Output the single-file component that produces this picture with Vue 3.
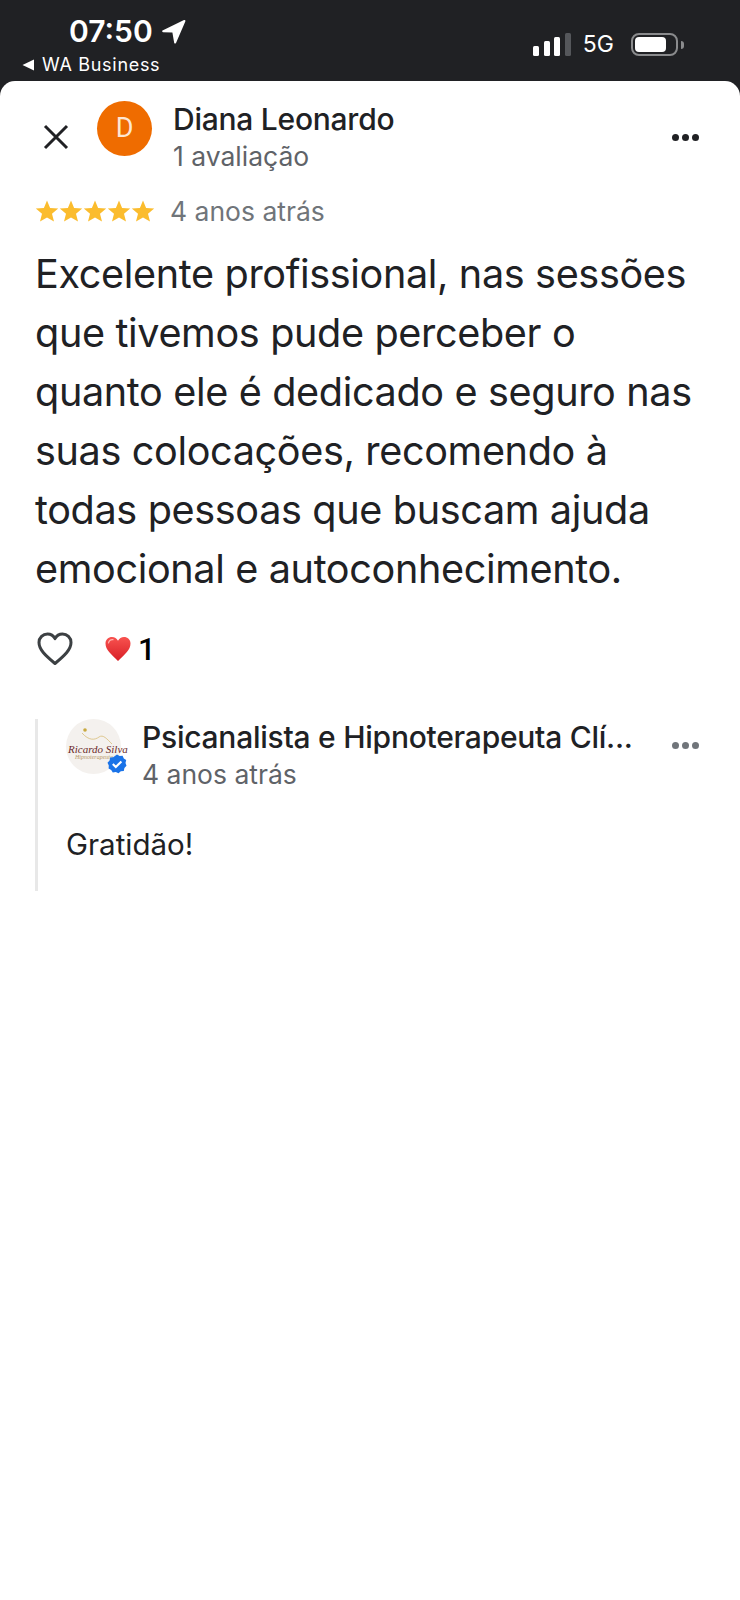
<script setup>
const stars = [0, 1, 2, 3, 4]
const bars = [
  { h: 10, c: '#fff' },
  { h: 15, c: '#fff' },
  { h: 19, c: '#fff' },
  { h: 23, c: '#55575b' }
]
</script>

<template>
  <div class="page">
    <header class="status">
      <div class="status-left">
        <div class="time-row">
          <span class="time">07:50</span>
          <svg class="loc" width="25" height="25" viewBox="0 0 25 25">
            <path d="M1.5 11.5 L23 1 Q24.8 0.6 24.3 2.4 L15 24 Q14 25.2 13.2 24 L11.4 13.4 L2 13.2 Q0.6 12.4 1.5 11.5 Z" fill="#fff" />
          </svg>
        </div>
        <div class="back-row">
          <svg width="12" height="12" viewBox="0 0 12 12"><path d="M0.5 6 L12 0.5 V11.5 Z" fill="#fff" /></svg>
          <span>WA Business</span>
        </div>
      </div>
      <div class="status-right">
        <div class="bars">
          <i v-for="(b, i) in bars" :key="i" :style="{ height: b.h + 'px', background: b.c }"></i>
        </div>
        <span class="net">5G</span>
        <div class="battery"><div class="battery-fill"></div></div>
        <div class="battery-tip"></div>
      </div>
    </header>

    <main class="sheet">
      <div class="top">
        <svg class="close" width="26" height="26" viewBox="0 0 26 26">
          <path d="M2 2 L24 24 M24 2 L2 24" stroke="#202124" stroke-width="3" fill="none" />
        </svg>
        <div class="avatar">D</div>
        <div class="who">
          <div class="name">Diana Leonardo</div>
          <div class="sub">1 avaliação</div>
        </div>
        <div class="dots dark"><i></i><i></i><i></i></div>
      </div>

      <div class="rating">
        <div class="stars">
          <svg v-for="s in stars" :key="s" width="24" height="22" viewBox="0 0 24 22">
            <path d="M12 0.5 L15.1 8 L23.2 8.6 L17 13.8 L19 21.6 L12 17.4 L5 21.6 L7 13.8 L0.8 8.6 L8.9 8 Z" fill="#fbbc2d" />
          </svg>
        </div>
        <span class="when">4 anos atrás</span>
      </div>

      <p class="body">Excelente profissional, nas sessões<br />que tivemos pude perceber o<br />quanto ele é dedicado e seguro nas<br />suas colocações, recomendo à<br />todas pessoas que buscam ajuda<br />emocional e autoconhecimento.</p>

      <div class="likes">
        <svg class="outline" width="36" height="34" viewBox="0 0 36 34">
          <path d="M18 31.5 C 8 23, 2 17.5, 2 10.5 C 2 5.5, 6 2, 10.5 2 C 13.6 2, 16.4 3.6, 18 6.6 C 19.6 3.6, 22.4 2, 25.5 2 C 30 2, 34 5.5, 34 10.5 C 34 17.5, 28 23, 18 31.5 Z" fill="none" stroke="#3c4043" stroke-width="3" stroke-linejoin="round" />
        </svg>
        <svg class="red" width="26" height="26" viewBox="0 0 26 26">
          <defs>
            <linearGradient id="rh" x1="0" y1="0" x2="0" y2="1">
              <stop offset="0" stop-color="#f8524f" />
              <stop offset="1" stop-color="#d81f26" />
            </linearGradient>
          </defs>
          <path d="M13 25 C 6 18, 0.5 14, 0.5 7.5 C 0.5 3.5, 3.5 1, 7 1 C 9.6 1, 11.8 2.4, 13 4.8 C 14.2 2.4, 16.4 1, 19 1 C 22.5 1, 25.5 3.5, 25.5 7.5 C 25.5 14, 20 18, 13 25 Z" fill="url(#rh)" />
          <path d="M3.5 7 C 4 4.5, 6 3.4, 8 3.6" fill="none" stroke="#ffb3ae" stroke-width="1.2" stroke-linecap="round" />
        </svg>
        <span class="count">1</span>
      </div>

      <section class="reply">
        <div class="reply-top">
          <div class="logo">
            <svg class="swoosh" width="36" height="24" viewBox="0 0 36 24">
              <circle cx="8" cy="4" r="1.8" fill="#c9a93f" />
              <path d="M5 7 C 12 15, 18 14, 22 11 C 26 8, 30 13, 35 18" fill="none" stroke="#d4b668" stroke-width="0.7" />
            </svg>
            <span class="logo-text">Ricardo Silva</span>
            <span class="logo-sub">Hipnoterapeuta</span>
            <svg class="badge" width="20" height="20" viewBox="0 0 20 20">
              <path d="M10 0.5 L12.6 2 L15.6 1.8 L16.8 4.4 L19.2 6 L18.5 9 L19.5 11.8 L17.4 14 L16.8 17 L13.8 17.2 L11.5 19.2 L8.8 18 L5.8 18.6 L4.2 16 L1.6 14.5 L1.8 11.5 L0.5 8.8 L2.6 6.6 L3.2 3.6 L6.2 3.2 Z" fill="#1a73e8" />
              <path d="M5.8 10 L8.8 13 L14.4 7.4" fill="none" stroke="#fff" stroke-width="2.1" />
            </svg>
          </div>
          <div class="reply-who">
            <div class="reply-name">Psicanalista e Hipnoterapeuta Clí...</div>
            <div class="sub">4 anos atrás</div>
          </div>
          <div class="dots grey"><i></i><i></i><i></i></div>
        </div>
        <p class="reply-body">Gratidão!</p>
      </section>
    </main>
  </div>
</template>

<style>
html, body { margin: 0; background: #fff; }
</style>

<style scoped>
.page {
  width: 740px;
  height: 1600px;
  background: #202124;
  font-family: Inter, "Noto Sans", sans-serif;
  display: flex;
  flex-direction: column;
  overflow: hidden;
}
.status {
  height: 81px;
  flex: none;
  display: flex;
  justify-content: space-between;
  color: #fff;
  box-sizing: border-box;
  padding: 0 56px 0 22px;
}
.status-left { display: flex; flex-direction: column; }
.time-row {
  display: flex;
  align-items: center;
  gap: 8px;
  margin: 14px 0 0 47px;
  height: 34px;
}
.time {
  font-size: 30px;
  font-weight: 600;
  line-height: 34px;
}
.back-row {
  display: flex;
  align-items: center;
  gap: 8px;
  font-size: 18px;
  font-weight: 400;
  letter-spacing: 0.7px;
  line-height: 22px;
  margin-top: 6px;
}
.status-right {
  display: flex;
  align-items: center;
  height: 23px;
  margin-top: 33px;
}
.bars { display: flex; align-items: flex-end; gap: 4.5px; height: 23px; }
.bars i { display: block; width: 6px; border-radius: 1.5px; }
.net {
  font-size: 23px;
  font-weight: 400;
  margin-left: 12px;
  line-height: 23px;
}
.battery {
  width: 47px;
  height: 23px;
  box-sizing: border-box;
  border: 2px solid #8a8b8d;
  border-radius: 8px;
  padding: 2px;
  margin-left: 17px;
}
.battery-fill { width: 31px; height: 15px; background: #fff; border-radius: 4px; }
.battery-tip {
  width: 3px;
  height: 8px;
  background: #8a8b8d;
  border-radius: 0 3px 3px 0;
  margin-left: 3px;
}

.sheet {
  flex: 1;
  background: #fff;
  border-radius: 15px 15px 0 0;
  box-sizing: border-box;
  padding: 20px 35px 0;
}
.top { display: flex; align-items: flex-start; height: 74px; }
.close { margin: 23px 0 0 8px; flex: none; }
.avatar {
  width: 55px;
  height: 55px;
  border-radius: 50%;
  background: #ef6c00;
  color: #fde6d2;
  font-family: Roboto, sans-serif;
  font-size: 27px;
  line-height: 55px;
  text-align: center;
  margin: 0 0 0 28px;
  flex: none;
}
.who { margin-left: 21px; flex: 1; }
.name {
  font-size: 30px;
  font-weight: 500;
  line-height: 36px;
  color: #202124;
  letter-spacing: -0.25px;
}
.sub {
  font-size: 26.5px;
  line-height: 36px;
  margin-top: 1px;
  color: #5f6368;
}
.dots { display: flex; gap: 3px; flex: none; }
.dots i { display: block; width: 7px; height: 7px; border-radius: 50%; }
.dots.dark { margin: 33px 6px 0 0; }
.dots.dark i { background: #202124; }
.dots.grey { margin: 23px 6px 0 0; }
.dots.grey i { background: #70757a; }

.rating { display: flex; align-items: center; height: 36px; margin-top: 18px; }
.stars { display: flex; }
.when {
  font-size: 26.5px;
  line-height: 36px;
  color: #70757a;
  margin-left: 15px;
}
.body {
  margin: 16px 0 0;
  font-size: 39.6px;
  line-height: 59px;
  color: #202124;
  white-space: nowrap;
  letter-spacing: -0.35px;
}
.likes { display: flex; align-items: center; height: 40px; margin-top: 30px; }
.outline { margin-left: 2px; }
.red { margin-left: 32px; }
.count { font-family: Roboto, sans-serif; font-size: 31px; font-weight: 500; color: #000; margin-left: 7px; }

.reply {
  margin-top: 50px;
  height: 172px;
  border-left: 3px solid #e8e8e8;
  padding-left: 28px;
}
.reply-top { display: flex; align-items: flex-start; }
.logo {
  position: relative;
  width: 55px;
  height: 55px;
  border-radius: 50%;
  background: #f4f1ee;
  flex: none;
}
.swoosh { position: absolute; left: 11px; top: 7px; }
.logo-text {
  position: absolute;
  left: 2px;
  top: 24px;
  font-family: "Liberation Serif", serif;
  font-style: italic;
  font-size: 11px;
  line-height: 12px;
  color: #6b2a2a;
  white-space: nowrap;
}
.logo-sub {
  position: absolute;
  left: 9px;
  top: 35px;
  font-family: "Liberation Serif", serif;
  font-style: italic;
  font-size: 6px;
  line-height: 7px;
  color: #b99a6a;
  white-space: nowrap;
}
.badge { position: absolute; right: -6px; bottom: 0; }
.reply-who { margin-left: 21px; width: 491px; flex: none; }
.reply-name {
  font-size: 30px;
  font-weight: 500;
  line-height: 36px;
  color: #202124;
  white-space: nowrap;
  letter-spacing: -0.25px;
}
.reply .dots { margin-left: auto; }
.reply-body {
  margin: 32px 0 0;
  font-size: 29.5px;
  line-height: 40px;
  color: #202124;
}
</style>
